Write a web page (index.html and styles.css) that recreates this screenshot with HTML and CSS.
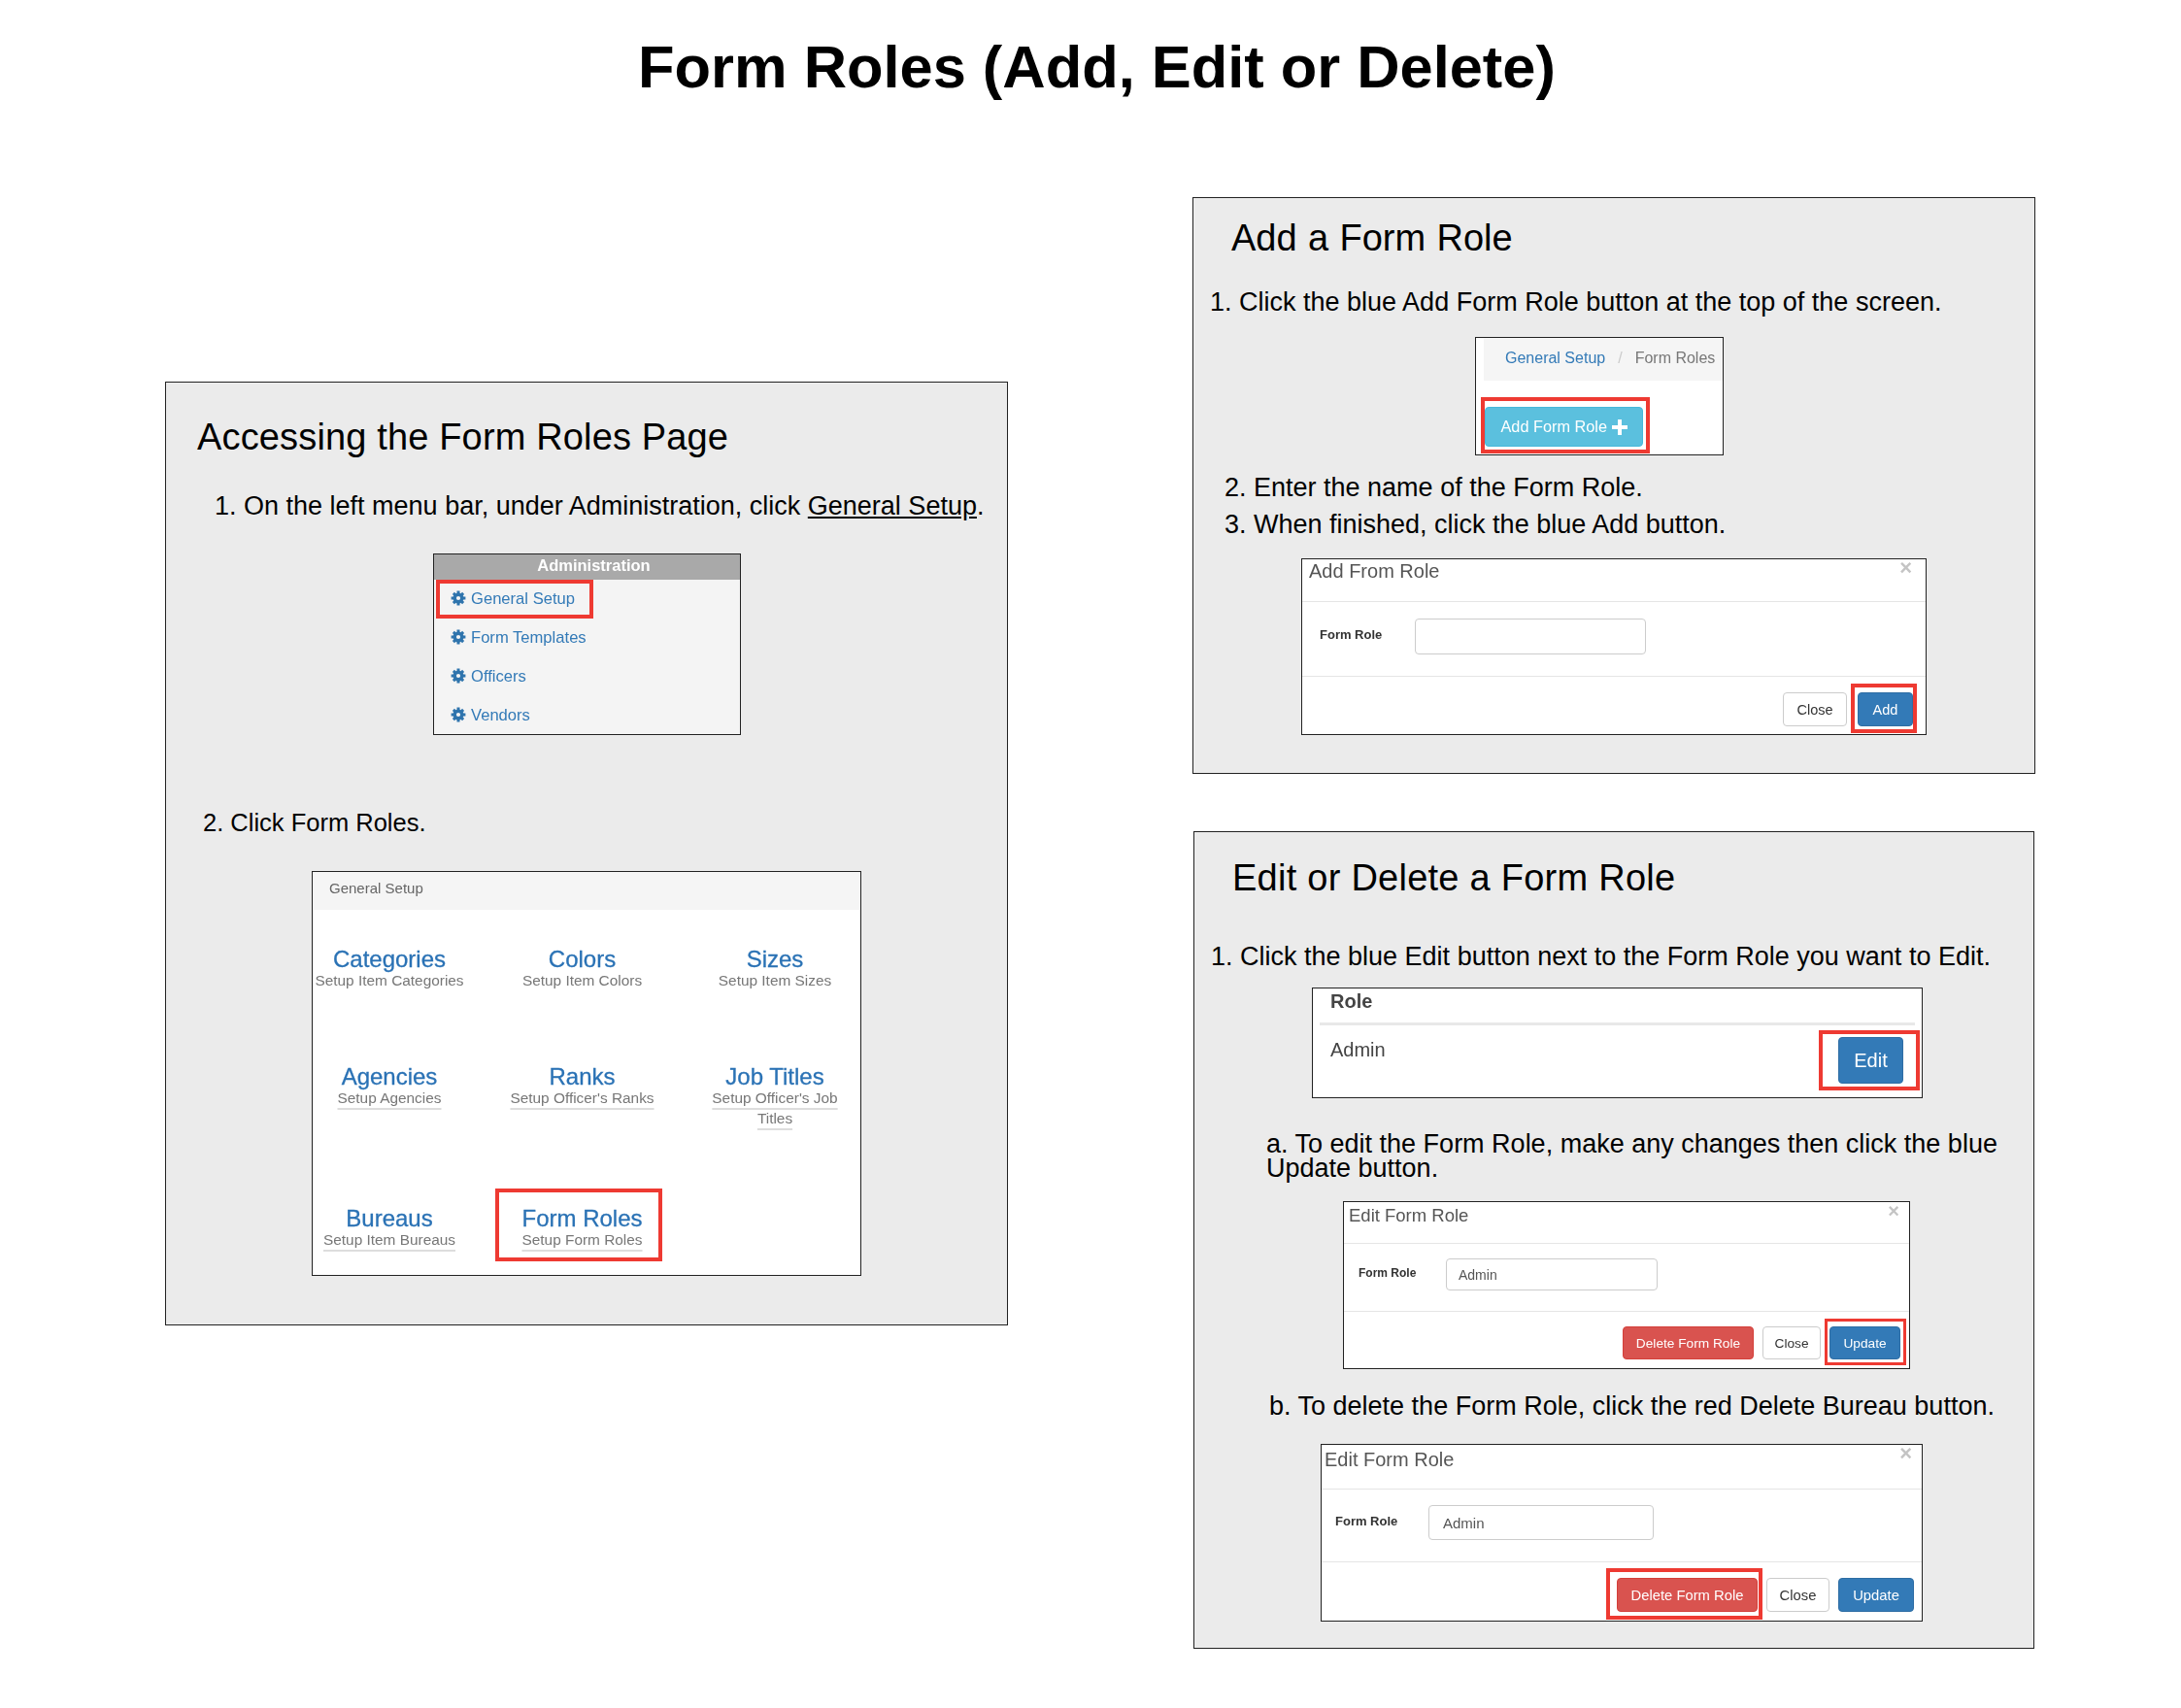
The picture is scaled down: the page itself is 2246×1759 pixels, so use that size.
FILE: index.html
```html
<!DOCTYPE html>
<html lang="en">
<head>
    <meta charset="UTF-8">
    <meta name="viewport" content="width=device-width, initial-scale=1.0">
    <title>Form Roles (Add, Edit or Delete)</title>
    <link rel="stylesheet" href="styles.css">
</head>
<body>
    <svg class="defs" width="0" height="0" aria-hidden="true">
        <symbol id="cog" viewBox="0 0 16 16">
            <circle cx="8" cy="8" r="3.8" fill="none" stroke="currentColor" stroke-width="3.4"/>
            <g stroke="currentColor" stroke-width="3">
                <path d="M8 0.6V3.5M8 12.5V15.4M0.6 8H3.5M12.5 8H15.4"/>
                <path d="M2.9 2.9L4.8 4.8M11.2 11.2L13.1 13.1M2.9 13.1L4.8 11.2M11.2 4.8L13.1 2.9"/>
            </g>
        </symbol>
    </svg>

    <h1>Form Roles (Add, Edit or Delete)</h1>

    <div class="columns">
        <div class="col-left">
            <section class="panel panel-access">
                <h2 class="access-title">Accessing the Form Roles Page</h2>
                <p class="step access-1">1. On the left menu bar, under Administration, click <u>General Setup</u>.</p>

                <div class="shot menu">
                    <div class="menu-head">Administration</div>
                    <ul>
                        <li class="mark mark-menu"><svg class="cog"><use href="#cog"/></svg>General Setup</li>
                        <li><svg class="cog"><use href="#cog"/></svg>Form Templates</li>
                        <li><svg class="cog"><use href="#cog"/></svg>Officers</li>
                        <li><svg class="cog"><use href="#cog"/></svg>Vendors</li>
                    </ul>
                </div>

                <p class="step access-2">2. Click Form Roles.</p>

                <div class="shot setup">
                    <div class="setup-head">General Setup</div>
                    <div class="setup-grid">
                        <div class="tile plain"><a>Categories</a><span>Setup Item Categories</span></div>
                        <div class="tile plain"><a>Colors</a><span>Setup Item Colors</span></div>
                        <div class="tile plain"><a>Sizes</a><span>Setup Item Sizes</span></div>
                        <div class="tile"><a>Agencies</a><span>Setup Agencies</span></div>
                        <div class="tile"><a>Ranks</a><span>Setup Officer's Ranks</span></div>
                        <div class="tile"><a>Job Titles</a><span>Setup Officer's Job Titles</span></div>
                        <div class="tile"><a>Bureaus</a><span>Setup Item Bureaus</span></div>
                        <div class="tile mark mark-tile"><a>Form Roles</a><span>Setup Form Roles</span></div>
                    </div>
                </div>
            </section>
        </div>

        <div class="col-right">
            <section class="panel panel-add">
                <h2 class="add-title">Add a Form Role</h2>
                <p class="step add-1">1. Click the blue Add Form Role button at the top of the screen.</p>

                <div class="shot crumbs">
                    <div class="crumb-bar">
                        <span class="crumb-link">General Setup</span>
                        <span class="crumb-sep">/</span>
                        <span class="crumb-now">Form Roles</span>
                    </div>
                    <button class="btn btn-info mark mark-addrole">Add Form Role
                        <svg class="plus" viewBox="0 0 16 16"><path d="M6 0H10V6H16V10H10V16H6V10H0V6H6Z"/></svg>
                    </button>
                </div>

                <p class="step add-2">2. Enter the name of the Form Role.</p>
                <p class="step add-3">3. When finished, click the blue Add button.</p>

                <div class="shot modal modal-add">
                    <div class="modal-head">
                        <span class="modal-title">Add From Role</span>
                        <span class="modal-x">×</span>
                    </div>
                    <div class="modal-body">
                        <label>Form Role</label>
                        <div class="input"></div>
                    </div>
                    <div class="modal-foot">
                        <button class="btn btn-default">Close</button>
                        <button class="btn btn-primary mark mark-add">Add</button>
                    </div>
                </div>
            </section>

            <section class="panel panel-edit">
                <h2 class="edit-title">Edit or Delete a Form Role</h2>
                <p class="step edit-1">1. Click the blue Edit button next to the Form Role you want to Edit.</p>

                <div class="shot roles">
                    <div class="roles-head">Role</div>
                    <div class="roles-row">
                        <span>Admin</span>
                        <button class="btn btn-primary mark mark-edit">Edit</button>
                    </div>
                </div>

                <p class="step edit-a">a. To edit the Form Role, make any changes then click the blue Update button.</p>

                <div class="shot modal modal-update">
                    <div class="modal-head">
                        <span class="modal-title">Edit Form Role</span>
                        <span class="modal-x">×</span>
                    </div>
                    <div class="modal-body">
                        <label>Form Role</label>
                        <div class="input">Admin</div>
                    </div>
                    <div class="modal-foot">
                        <button class="btn btn-danger">Delete Form Role</button>
                        <button class="btn btn-default">Close</button>
                        <button class="btn btn-primary mark mark-update">Update</button>
                    </div>
                </div>

                <p class="step edit-b">b. To delete the Form Role, click the red Delete Bureau button.</p>

                <div class="shot modal modal-delete">
                    <div class="modal-head">
                        <span class="modal-title">Edit Form Role</span>
                        <span class="modal-x">×</span>
                    </div>
                    <div class="modal-body">
                        <label>Form Role</label>
                        <div class="input">Admin</div>
                    </div>
                    <div class="modal-foot">
                        <button class="btn btn-danger mark mark-delete">Delete Form Role</button>
                        <button class="btn btn-default">Close</button>
                        <button class="btn btn-primary">Update</button>
                    </div>
                </div>
            </section>
        </div>
    </div>
</body>
</html>
```

FILE: styles.css
```css
* {
    box-sizing: border-box;
}

body {
    margin: 0;
    font-family: "Liberation Sans", Arial, sans-serif;
    color: #000;
    background: #fff;
}

.defs {
    position: absolute;
}

h1 {
    margin: 0;
    padding: 34px 0 0 13px;
    height: 203px;
    font-size: 61.4px;
    line-height: 70px;
    text-align: center;
}

.columns {
    display: flex;
    align-items: flex-start;
    padding-left: 170px;
    gap: 190px;
}

.col-left {
    width: 868px;
    padding-top: 190px;
}

.col-right {
    width: 868px;
}

.panel {
    background: #ebebeb;
    border: 1px solid #222;
}

h2 {
    margin: 0;
    font-size: 38px;
    font-weight: normal;
    line-height: 44px;
}

.step {
    margin: 0;
    font-size: 27px;
    line-height: 30px;
}

/* the pasted screenshots are a bit soft */
.shot {
    background: #fff;
    border: 1px solid #222;
    color: #555;
    filter: blur(0.35px);
}

/* red highlight boxes sit on top of the screenshots */
.mark {
    position: relative;
}

.mark::after {
    content: "";
    position: absolute;
    border: 4px solid #ee3a32;
}

/* left panel */
.panel-access {
    padding-bottom: 50px;
}

.access-title {
    margin: 34px 0 0 32px;
    letter-spacing: 0.15px;
}

.access-1 {
    margin: 34px 0 0 50px;
}

.access-2 {
    margin: 75px 0 0 38px;
    font-size: 25.5px;
}

.menu {
    margin: 34px 0 0 275px;
    width: 317px;
    height: 187px;
    background: #f4f4f4;
}

.menu-head {
    height: 26px;
    background: #a9a9a9;
    color: #fff;
    font-size: 16.5px;
    font-weight: bold;
    line-height: 23px;
    text-align: center;
    padding-left: 14px;
}

.menu ul {
    margin: 0;
    padding: 0;
    list-style: none;
}

.menu li {
    display: flex;
    align-items: center;
    width: 162px;
    height: 40px;
    margin-left: 2px;
    padding-left: 15px;
    color: #337ab7;
    font-size: 16.6px;
    white-space: nowrap;
}

.cog {
    width: 16px;
    height: 16px;
    margin: -2px 5px 0 0;
    color: #2f74ad;
}

.mark-menu::after {
    inset: 0;
}

.setup {
    margin: 35px 0 0 150px;
    width: 566px;
    height: 417px;
}

.setup-head {
    height: 39px;
    padding-left: 17px;
    background: #f5f5f5;
    color: #666;
    font-size: 15px;
    line-height: 33px;
}

.setup-grid {
    display: grid;
    grid-template-columns: 158px 239px 158px;
    grid-template-rows: 121px 146px auto;
    padding-top: 39px;
    text-align: center;
}

.tile a {
    display: block;
    color: #2a72b5;
    font-size: 24px;
    line-height: 23px;
    -webkit-text-stroke: 0.3px #2a72b5;
}

.tile span {
    display: block;
    color: #777;
    font-size: 15.4px;
    line-height: 21px;
    text-decoration: underline;
    text-decoration-color: #ddd;
    text-decoration-thickness: 1.5px;
    text-decoration-skip-ink: none;
    text-underline-offset: 5px;
}

.tile.plain span {
    text-decoration: none;
}

.mark-tile::after {
    inset: -19px 37px -12px 30px;
}

/* add panel */
.panel-add {
    padding-bottom: 39px;
}

.add-title {
    margin: 19px 0 0 39px;
    word-spacing: 0.8px;
}

.add-1 {
    margin: 29px 0 0 17px;
}

.add-2 {
    margin: 18px 0 0 32px;
}

.add-3 {
    margin: 8px 0 0 32px;
}

.crumbs {
    margin: 21px 0 0 290px;
    width: 256px;
    height: 122px;
    overflow: hidden;
}

.crumb-bar {
    display: flex;
    align-items: center;
    gap: 13px;
    height: 44px;
    margin-left: 8px;
    padding: 0 0 3px 22px;
    background: #f5f5f5;
    font-size: 16px;
    white-space: nowrap;
}

.crumb-link {
    color: #337ab7;
}

.crumb-sep {
    color: #ccc;
}

.crumb-now {
    color: #777;
}

/* panel below */
.panel-edit {
    margin: 59px 0 0 1px;
    width: 866px;
    padding-bottom: 27px;
}

.edit-title {
    margin: 25px 0 0 39px;
    letter-spacing: 0.25px;
}

.edit-1 {
    margin: 44px 0 0 17px;
}

.edit-a {
    margin: 35px 0 0 74px;
    width: 770px;
    line-height: 25px;
}

.edit-b {
    margin: 23px 0 0 77px;
}

.roles {
    margin: 17px 0 0 121px;
    width: 629px;
    height: 114px;
    color: #444;
}

.roles-head {
    height: 38px;
    margin: 0 7px;
    padding-left: 11px;
    border-bottom: 3px solid #e8e8e8;
    font-size: 20px;
    font-weight: bold;
    line-height: 26px;
}

.roles-row {
    display: flex;
    justify-content: space-between;
    align-items: flex-start;
    padding: 13px 19px 0 18px;
    font-size: 20px;
    line-height: 24px;
}

/* buttons */
.btn {
    height: 35px;
    padding: 0;
    border: 1px solid transparent;
    border-radius: 4px;
    color: #fff;
    font-family: inherit;
    font-size: 14.5px;
    white-space: nowrap;
}

.btn-default {
    background: #fff;
    border-color: #ccc;
    color: #333;
}

.btn-primary {
    background: #337ab7;
    border-color: #2e6da4;
}

.btn-danger {
    background: #d9534f;
    border-color: #d43f3a;
}

.btn-info {
    background: #5bc0de;
    border-color: #46b8da;
}

.plus {
    width: 16px;
    height: 16px;
    fill: #fff;
    vertical-align: -3px;
}

.mark-addrole {
    display: block;
    width: 163px;
    height: 41px;
    margin: 27px 0 0 9px;
    font-size: 16.3px;
}

.mark-addrole::after {
    inset: -11px -8px -8px -5px;
}

.mark-edit {
    width: 67px;
    height: 48px;
    margin-top: -1px;
    font-size: 20px;
}

.mark-edit::after {
    inset: -8px -18px -8px -21px;
}

/* modals */
.modal-head {
    display: flex;
    justify-content: space-between;
    border-bottom: 1px solid #e5e5e5;
}

.modal-title {
    font-size: 20px;
}

.modal-x {
    color: #c4c4c4;
    font-size: 22px;
    font-weight: bold;
    line-height: 18px;
}

.modal-body {
    display: flex;
    align-items: flex-start;
    border-bottom: 1px solid #e5e5e5;
}

.modal-body label {
    color: #333;
    font-weight: bold;
    white-space: nowrap;
}

.input {
    border: 1px solid #ccc;
    border-radius: 4px;
    color: #555;
}

.modal-foot {
    display: flex;
    justify-content: flex-end;
}

.modal-add {
    margin: 20px 0 0 111px;
    width: 644px;
    height: 182px;
}

.modal-add .modal-head {
    height: 44px;
    padding: 0 14px 0 7px;
    line-height: 24px;
}

.modal-add .modal-body {
    height: 77px;
    padding: 17px 0 0 18px;
}

.modal-add label {
    width: 98px;
    font-size: 13px;
    line-height: 34px;
}

.modal-add .input {
    width: 238px;
    height: 37px;
}

.modal-add .modal-foot {
    gap: 11px;
    padding: 16px 13px 0 0;
}

.modal-add .btn-default {
    width: 66px;
}

.modal-add .btn-primary {
    width: 57px;
}

.mark-add::after {
    inset: -10px -5px -8px -8px;
}

.modal-update {
    margin: 21px 0 0 153px;
    width: 584px;
    height: 173px;
}

.modal-update .modal-head {
    height: 43px;
    padding: 0 10px 0 5px;
    line-height: 27px;
}

.modal-update .modal-title {
    font-size: 18.5px;
}

.modal-update .modal-x {
    font-size: 20px;
}

.modal-update .modal-body {
    height: 70px;
    padding: 15px 0 0 15px;
}

.modal-update label {
    width: 90px;
    font-size: 12px;
    line-height: 31px;
}

.modal-update .input {
    width: 218px;
    height: 33px;
    padding-left: 12px;
    font-size: 14px;
    line-height: 33px;
}

.modal-update .modal-foot {
    gap: 9px;
    padding: 15px 9px 0 0;
}

.modal-update .btn {
    height: 34px;
    font-size: 13.7px;
}

.modal-update .btn-danger {
    width: 135px;
}

.modal-update .btn-default {
    width: 60px;
}

.modal-update .btn-primary {
    width: 73px;
}

.mark-update::after {
    inset: -9px -7px -7px -6px;
    border-width: 3px;
}

.modal-delete {
    margin: 24px 0 0 130px;
    width: 620px;
    height: 183px;
}

.modal-delete .modal-head {
    height: 46px;
    padding: 0 10px 0 3px;
    line-height: 30px;
}

.modal-delete .modal-body {
    height: 75px;
    padding: 16px 0 0 14px;
}

.modal-delete label {
    width: 96px;
    font-size: 13px;
    line-height: 33px;
}

.modal-delete .input {
    width: 232px;
    height: 36px;
    padding-left: 14px;
    font-size: 15px;
    line-height: 36px;
}

.modal-delete .modal-foot {
    gap: 9px;
    padding: 16px 8px 0 0;
}

.modal-delete .btn {
    font-size: 14.8px;
}

.modal-delete .btn-danger {
    width: 145px;
}

.modal-delete .btn-default {
    width: 65px;
}

.modal-delete .btn-primary {
    width: 78px;
}

.mark-delete::after {
    inset: -11px -6px -9px -12px;
}
```
